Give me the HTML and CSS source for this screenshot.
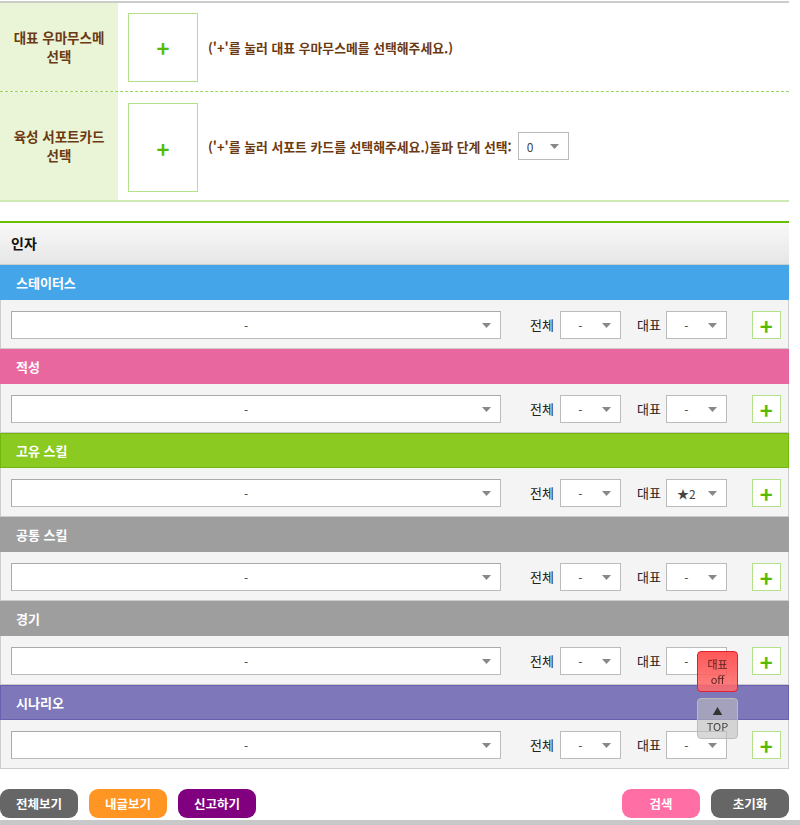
FILE: index.html
```html
<!DOCTYPE html>
<html lang="ko">
<head>
    <meta charset="UTF-8">
    <title>우마무스메 인자 검색</title>
    <link rel="stylesheet" href="styles.css">
</head>
<body>
    <div class="wrap">
        <div class="pick-table">
            <div class="pick-row first">
                <div class="pick-label">대표 우마무스메<br>선택</div>
                <div class="pick-body">
                    <button class="pick-box">+</button>
                    <span class="pick-help">('+'를 눌러 대표 우마무스메를 선택해주세요.)</span>
                </div>
            </div>
            <div class="pick-row second">
                <div class="pick-label">육성 서포트카드<br>선택</div>
                <div class="pick-body">
                    <button class="pick-box tall">+</button>
                    <span class="pick-help">('+'를 눌러 서포트 카드를 선택해주세요.)돌파 단계 선택:</span>
                    <select class="sel sel-limit">
                        <option>0</option>
                    </select>
                </div>
            </div>
        </div>

        <div class="factor-title">인자</div>

        <div class="factor">
            <div class="factor-head blue">스테이터스</div>
            <div class="factor-row">
                <select class="sel sel-main"><option>-</option></select>
                <span class="lbl lbl-all">전체</span>
                <select class="sel sel-small"><option>-</option></select>
                <span class="lbl lbl-rep">대표</span>
                <select class="sel sel-small"><option>-</option></select>
                <button class="add-btn">+</button>
            </div>
        </div>

        <div class="factor">
            <div class="factor-head pink">적성</div>
            <div class="factor-row">
                <select class="sel sel-main"><option>-</option></select>
                <span class="lbl lbl-all">전체</span>
                <select class="sel sel-small"><option>-</option></select>
                <span class="lbl lbl-rep">대표</span>
                <select class="sel sel-small"><option>-</option></select>
                <button class="add-btn">+</button>
            </div>
        </div>

        <div class="factor">
            <div class="factor-head green">고유 스킬</div>
            <div class="factor-row">
                <select class="sel sel-main"><option>-</option></select>
                <span class="lbl lbl-all">전체</span>
                <select class="sel sel-small"><option>-</option></select>
                <span class="lbl lbl-rep">대표</span>
                <select class="sel sel-small"><option>★2</option></select>
                <button class="add-btn">+</button>
            </div>
        </div>

        <div class="factor">
            <div class="factor-head gray">공통 스킬</div>
            <div class="factor-row">
                <select class="sel sel-main"><option>-</option></select>
                <span class="lbl lbl-all">전체</span>
                <select class="sel sel-small"><option>-</option></select>
                <span class="lbl lbl-rep">대표</span>
                <select class="sel sel-small"><option>-</option></select>
                <button class="add-btn">+</button>
            </div>
        </div>

        <div class="factor">
            <div class="factor-head gray">경기</div>
            <div class="factor-row">
                <select class="sel sel-main"><option>-</option></select>
                <span class="lbl lbl-all">전체</span>
                <select class="sel sel-small"><option>-</option></select>
                <span class="lbl lbl-rep">대표</span>
                <select class="sel sel-small"><option>-</option></select>
                <button class="add-btn">+</button>
            </div>
        </div>

        <div class="factor">
            <div class="factor-head purple">시나리오</div>
            <div class="factor-row">
                <select class="sel sel-main"><option>-</option></select>
                <span class="lbl lbl-all">전체</span>
                <select class="sel sel-small"><option>-</option></select>
                <span class="lbl lbl-rep">대표</span>
                <select class="sel sel-small"><option>-</option></select>
                <button class="add-btn">+</button>
            </div>
        </div>

        <div class="bottom-bar">
            <div class="btn-group">
                <button class="btn btn-dark">전체보기</button>
                <button class="btn btn-orange">내글보기</button>
                <button class="btn btn-purple">신고하기</button>
            </div>
            <div class="btn-group">
                <button class="btn btn-pink">검색</button>
                <button class="btn btn-dark">초기화</button>
            </div>
        </div>
    </div>
    <div class="footer-line"></div>

    <div class="float-menu">
        <button class="float-btn float-off">대표<br>off</button>
        <button class="float-btn float-top"><span class="arrow">▲</span>TOP</button>
    </div>
</body>
</html>
```

FILE: styles.css
```css
body {
    margin: 0;
    font-family: "Noto Sans CJK KR", "Noto Sans", sans-serif;
    font-size: 13px;
    color: #333;
    background: #fff;
}
.wrap {
    width: 789px;
}
button, select {
    font-family: inherit;
}

/* top picker table */
.pick-table {
    margin-top: 1px;
    border-top: 2px solid #ccc;
    border-bottom: 2px solid #cfe9b4;
}
.pick-row {
    display: flex;
}
.pick-row.first {
    height: 88px;
    border-bottom: 1px dashed #96d65c;
}
.pick-row.second {
    height: 108px;
}
.pick-label {
    width: 118px;
    background: #eaf5d8;
    color: #6b3a12;
    font-size: 13.5px;
    font-weight: bold;
    line-height: 19px;
    text-align: center;
    display: flex;
    align-items: center;
    justify-content: center;
}
.pick-body {
    display: flex;
    align-items: center;
    padding-left: 10px;
}
.pick-box {
    width: 70px;
    height: 69px;
    background: #fff;
    border: 1px solid #b4e08c;
    color: #55bb00;
    font-size: 22px;
    font-weight: bold;
    line-height: 1;
    padding: 0;
    margin-right: 10px;
}
.pick-box.tall {
    height: 89px;
    margin-top: 3px;
}
.pick-help {
    color: #6b3a12;
    font-weight: bold;
    font-size: 12.85px;
}
.sel {
    appearance: none;
    -webkit-appearance: none;
    height: 28px;
    border: 1px solid #bbb;
    border-radius: 0;
    background: #fff url("data:image/svg+xml,%3Csvg xmlns='http://www.w3.org/2000/svg' width='9' height='5'%3E%3Cpath d='M0 0h9L4.5 5z' fill='%23888'/%3E%3C/svg%3E") no-repeat right 9px center;
    font-size: 12px;
    color: #444;
    text-align-last: center;
    padding: 0 20px 0 0;
    margin: 0;
}
.sel-limit {
    width: 51px;
    margin-left: 6px;
    text-align-last: left;
    padding-left: 8px;
}

/* factor sections */
.factor-title {
    margin-top: 19px;
    border-top: 2px solid #66c000;
    border-bottom: 1px solid #ccc;
    height: 41px;
    line-height: 41px;
    padding-left: 11px;
    background: linear-gradient(#f8f8f8, #e6e6e6);
    color: #111;
    font-size: 14px;
    font-weight: bold;
}
.factor-head {
    height: 35px;
    line-height: 35px;
    padding-left: 16px;
    color: #fff;
    font-weight: bold;
    box-sizing: border-box;
}
.blue { background: #44a6e9; }
.pink { background: #e8679e; }
.green { background: #8bca20; border: 1px solid #70b810; padding-left: 15px; line-height: 33px; }
.gray { background: #9e9e9e; }
.purple { background: #7e77b9; border: 1px solid #6a60b0; padding-left: 15px; line-height: 33px; }
.factor-row {
    display: flex;
    align-items: flex-start;
    height: 37px;
    padding: 11px 0 0 10px;
    background: #f4f4f4;
    border-left: 1px solid #ccc;
    border-right: 1px solid #ccc;
    border-bottom: 1px solid #ccc;
}
.sel-main {
    width: 490px;
    border-top-color: #aaa;
    border-left-color: #aaa;
}
.sel-small {
    width: 61px;
}
.lbl {
    color: #222;
    font-size: 13px;
    line-height: 28px;
    margin-right: 6px;
}
.lbl-all {
    margin-left: 29px;
}
.lbl-rep {
    margin-left: 16px;
    margin-right: 5px;
}
.add-btn {
    width: 29px;
    height: 28px;
    margin-left: 25px;
    padding: 0;
    background: #fff;
    border: 1px solid #b4e08c;
    color: #55bb00;
    font-size: 22px;
    font-weight: bold;
    line-height: 1;
}

/* buttons */
.bottom-bar {
    display: flex;
    justify-content: space-between;
    margin-top: 20px;
}
.btn-group {
    display: flex;
    gap: 11px;
}
.btn {
    width: 78px;
    height: 29px;
    border: none;
    border-radius: 9px;
    color: #fff;
    font-size: 12.5px;
    font-weight: bold;
    padding: 0;
}
.btn-dark { background: #666; }
.btn-orange { background: #ff9522; }
.btn-purple { background: #800080; }
.btn-pink { background: #ff6fa6; }
.footer-line {
    margin-top: 2px;
    height: 6px;
    background: #c8c8c8;
}

/* floating menu */
.float-menu {
    position: fixed;
    right: 62px;
    bottom: 86px;
    display: flex;
    flex-direction: column;
    gap: 6px;
}
.float-btn {
    width: 41px;
    height: 41px;
    border-radius: 4px;
    padding: 0;
    font-size: 11px;
    line-height: 15px;
}
.float-off {
    background: linear-gradient(rgba(255, 70, 70, 0.9), rgba(255, 110, 110, 0.85));
    border: 1px solid #e0202a;
    color: #552222;
}
.float-top {
    background: rgba(190, 190, 190, 0.6);
    border: 1px solid #bbb;
    color: #444;
    line-height: 13px;
}
.float-top .arrow {
    display: block;
    color: #333;
    font-size: 10px;
    line-height: 13px;
    margin-bottom: 3px;
}
```
